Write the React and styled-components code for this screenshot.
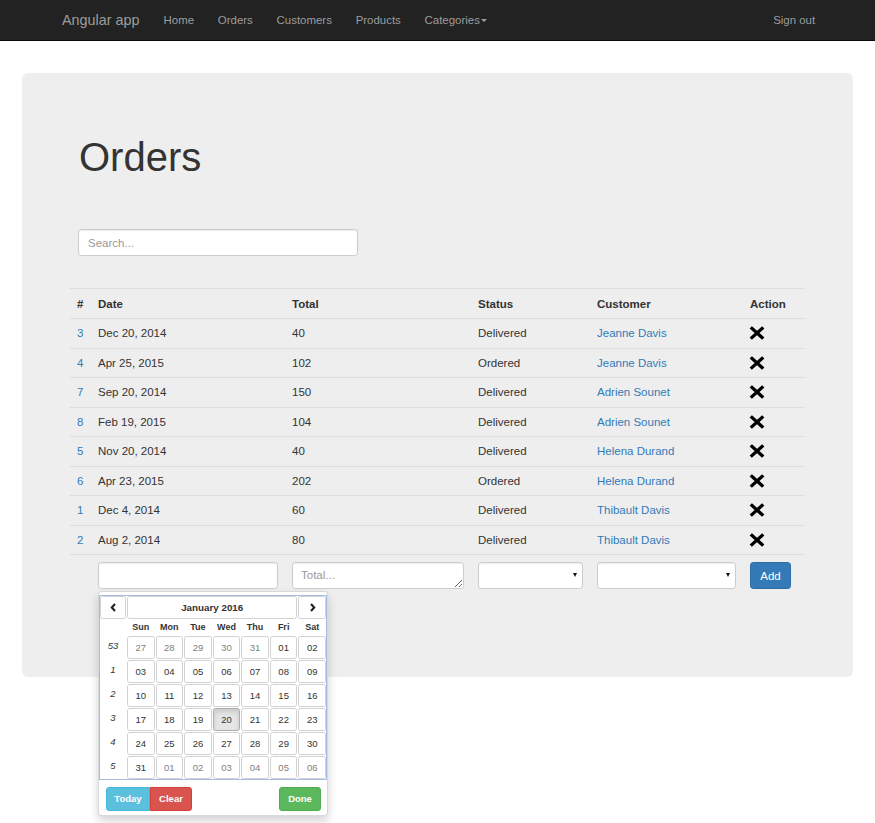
import React from "react";
import styled, { createGlobalStyle, css } from "styled-components";

const GlobalStyle = createGlobalStyle`
  html, body { margin: 0; padding: 0; background: #fff; }
  body {
    font-family: "Liberation Sans", Arial, sans-serif;
    font-size: 11.5px;
    line-height: 1.43;
    color: #333;
  }
  * { box-sizing: border-box; }
`;

const Navbar = styled.nav`
  height: 41px;
  background: #222;
  border-bottom: 1px solid #080808;
  display: flex;
  align-items: center;
  padding: 0 48px 0 50px;
`;

const Brand = styled.a`
  padding: 0 12px;
  font-size: 14.4px;
  line-height: 40px;
  color: #9d9d9d;
  text-decoration: none;
`;

const NavLink = styled.a`
  padding: 0 11.9px;
  font-size: 11.45px;
  line-height: 40px;
  color: #9d9d9d;
  text-decoration: none;
  display: flex;
  align-items: center;
  ${(p) => p.$right && css`margin-left: auto;`}
`;

const Caret = styled.span`
  display: inline-block;
  width: 0;
  height: 0;
  margin-left: 1.5px;
  border-top: 3.5px solid #9d9d9d;
  border-left: 3.5px solid transparent;
  border-right: 3.5px solid transparent;
`;

const Main = styled.main`
  position: relative;
  padding: 32px 22px 146px;
`;

const Jumbotron = styled.section`
  position: relative;
  background: #eee;
  border-radius: 6px;
  padding: 62px 48px 81px;
`;

const Title = styled.h1`
  margin: 0 0 50px 9px;
  font-size: 40px;
  line-height: 44px;
  font-weight: 400;
  color: #333;
`;

const inputBase = css`
  height: 27px;
  border: 1px solid #ccc;
  border-radius: 3.3px;
  background: #fff;
  box-shadow: inset 0 1px 1px rgba(0, 0, 0, 0.075);
  font-family: inherit;
  font-size: 11.5px;
  color: #555;
  padding: 5px 9px;
  outline: none;
  &::placeholder { color: #999; }
`;

const SearchInput = styled.input`
  ${inputBase}
  display: block;
  width: 280px;
  margin: 0 0 32px 8px;
`;

const Table = styled.table`
  width: 100%;
  border-collapse: collapse;
  table-layout: fixed;
`;

const Th = styled.th`
  text-align: left;
  font-weight: 700;
  padding: 6.5px 7px 6.5px;
  line-height: 16px;
  border-top: 1px solid #ddd;
`;

const Td = styled.td`
  padding: 6px 7px;
  line-height: 16.5px;
  border-top: 1px solid #ddd;
  vertical-align: middle;
  ${(p) => p.$form && css`padding: 7px 7px;`}
`;

const Link = styled.a`
  color: #337ab7;
  text-decoration: none;
`;

const RemoveIcon = styled.svg`
  display: block;
  margin-left: -1px;
`;

const FieldWrap = styled.div`
  position: relative;
`;

const TextInput = styled.input`
  ${inputBase}
  display: block;
  width: 100%;
`;

const TextArea = styled.textarea`
  ${inputBase}
  display: block;
  width: 100%;
  resize: vertical;
  line-height: 15px;
  padding: 5px 8px;
`;

const SelectWrap = styled.div`
  position: relative;
  &::after {
    content: "";
    position: absolute;
    right: 6px;
    top: 11px;
    border-top: 4px solid #111;
    border-left: 2.5px solid transparent;
    border-right: 2.5px solid transparent;
    pointer-events: none;
  }
`;

const Select = styled.select`
  ${inputBase}
  appearance: none;
  -webkit-appearance: none;
  display: block;
  width: 100%;
`;

const AddButton = styled.button`
  height: 27px;
  width: 41px;
  padding: 0;
  background: #337ab7;
  border: 1px solid #2e6da4;
  border-radius: 3.3px;
  color: #fff;
  font-family: inherit;
  font-size: 11.5px;
`;

const Popup = styled.div`
  position: absolute;
  top: calc(100% + 2px);
  left: 0;
  width: 230px;
  background: #fff;
  border: 1px solid rgba(0, 0, 0, 0.15);
  border-radius: 4px;
  box-shadow: 0 5px 10px rgba(0, 0, 0, 0.175);
  padding: 3px 0 4px;
  z-index: 10;
`;

const CalGrid = styled.div`
  border: 1px solid #a1bde6;
  display: grid;
  grid-template-columns: 26px repeat(7, 1fr);
  grid-template-rows: 23px 15px repeat(6, 23px);
  gap: 1px;
`;

const CalButton = styled.button`
  background: #fff;
  border: 1px solid #d2d2d2;
  border-radius: 2.5px;
  padding: 0;
  margin: 0;
  font-family: inherit;
  color: #333;
  display: flex;
  align-items: center;
  justify-content: center;
  ${(p) => p.$span && css`grid-column: ${p.$span};`}
  ${(p) => p.$title && css`font-weight: 700; font-size: 9.8px;`}
  ${(p) => p.$day && css`font-size: 9.5px;`}
  ${(p) => p.$muted && css`color: #808080;`}
  ${(p) => p.$active && css`
    background: #e6e6e6;
    border-color: #adadad;
    box-shadow: inset 0 3px 5px rgba(0, 0, 0, 0.125);
  `}
`;

const WeekDay = styled.div`
  font-size: 9px;
  font-weight: 700;
  text-align: center;
  line-height: 15px;
`;

const WeekNum = styled.div`
  font-size: 9.5px;
  font-style: italic;
  display: flex;
  align-items: center;
  justify-content: center;
  padding-bottom: 2px;
`;

const Footer = styled.div`
  display: flex;
  justify-content: space-between;
  padding: 7px 6px 0 7px;
`;

const BtnGroup = styled.div`
  display: flex;
`;

const SmallBtn = styled.button`
  height: 23.5px;
  padding: 0;
  width: ${(p) => p.$w}px;
  border: 1px solid ${(p) => p.$border};
  background: ${(p) => p.$bg};
  color: #fff;
  font-family: inherit;
  font-size: 9.5px;
  font-weight: 700;
  border-radius: ${(p) => p.$radius || "3px"};
`;

const orders = [
  { id: 3, date: "Dec 20, 2014", total: 40, status: "Delivered", customer: "Jeanne Davis" },
  { id: 4, date: "Apr 25, 2015", total: 102, status: "Ordered", customer: "Jeanne Davis" },
  { id: 7, date: "Sep 20, 2014", total: 150, status: "Delivered", customer: "Adrien Sounet" },
  { id: 8, date: "Feb 19, 2015", total: 104, status: "Delivered", customer: "Adrien Sounet" },
  { id: 5, date: "Nov 20, 2014", total: 40, status: "Delivered", customer: "Helena Durand" },
  { id: 6, date: "Apr 23, 2015", total: 202, status: "Ordered", customer: "Helena Durand" },
  { id: 1, date: "Dec 4, 2014", total: 60, status: "Delivered", customer: "Thibault Davis" },
  { id: 2, date: "Aug 2, 2014", total: 80, status: "Delivered", customer: "Thibault Davis" },
];

const pad = (n) => String(n).padStart(2, "0");

const weeks = [
  { n: 53, days: [27, 28, 29, 30, 31, 1, 2].map((d, i) => ({ d, muted: i < 5 })) },
  { n: 1, days: [3, 4, 5, 6, 7, 8, 9].map((d) => ({ d })) },
  { n: 2, days: [10, 11, 12, 13, 14, 15, 16].map((d) => ({ d })) },
  { n: 3, days: [17, 18, 19, 20, 21, 22, 23].map((d) => ({ d, active: d === 20 })) },
  { n: 4, days: [24, 25, 26, 27, 28, 29, 30].map((d) => ({ d })) },
  { n: 5, days: [31, 1, 2, 3, 4, 5, 6].map((d, i) => ({ d, muted: i > 0 })) },
];

const Remove = () => (
  <RemoveIcon width="16" height="14" viewBox="0 0 16 14">
    <path d="M3 2.5 L13 11.5 M13 2.5 L3 11.5" stroke="#000" strokeWidth="3.3" strokeLinecap="square" fill="none" />
  </RemoveIcon>
);

const Chevron = ({ dir }) => (
  <svg width="7" height="9" viewBox="0 0 7 9">
    <path
      d={dir === "left" ? "M5 1 L1.8 4.5 L5 8" : "M2 1 L5.2 4.5 L2 8"}
      stroke="#222"
      strokeWidth="2.1"
      fill="none"
    />
  </svg>
);

const DatePicker = () => (
  <Popup>
    <CalGrid>
      <CalButton><Chevron dir="left" /></CalButton>
      <CalButton $title $span="2 / 8">January 2016</CalButton>
      <CalButton><Chevron dir="right" /></CalButton>
      <div />
      {["Sun", "Mon", "Tue", "Wed", "Thu", "Fri", "Sat"].map((w) => (
        <WeekDay key={w}>{w}</WeekDay>
      ))}
      {weeks.map((wk) => (
        <React.Fragment key={wk.n}>
          <WeekNum>{wk.n}</WeekNum>
          {wk.days.map((day, i) => (
            <CalButton key={i} $day $muted={day.muted} $active={day.active}>
              {pad(day.d)}
            </CalButton>
          ))}
        </React.Fragment>
      ))}
    </CalGrid>
    <Footer>
      <BtnGroup>
        <SmallBtn $w={44} $bg="#5bc0de" $border="#46b8da" $radius="3px 0 0 3px">Today</SmallBtn>
        <SmallBtn $w={42} $bg="#d9534f" $border="#d43f3a" $radius="0 3px 3px 0">Clear</SmallBtn>
      </BtnGroup>
      <SmallBtn $w={42} $bg="#5cb85c" $border="#4cae4c">Done</SmallBtn>
    </Footer>
  </Popup>
);

export default function App() {
  return (
    <>
      <GlobalStyle />
      <Navbar>
        <Brand href="#">Angular app</Brand>
        <NavLink href="#">Home</NavLink>
        <NavLink href="#">Orders</NavLink>
        <NavLink href="#">Customers</NavLink>
        <NavLink href="#">Products</NavLink>
        <NavLink href="#">Categories<Caret /></NavLink>
        <NavLink href="#" $right>Sign out</NavLink>
      </Navbar>
      <Main>
        <Jumbotron>
          <Title>Orders</Title>
          <SearchInput placeholder="Search..." />
          <Table>
            <colgroup>
              <col style={{ width: 21 }} />
              <col style={{ width: 194 }} />
              <col style={{ width: 186 }} />
              <col style={{ width: 119 }} />
              <col style={{ width: 153 }} />
              <col style={{ width: 62 }} />
            </colgroup>
            <thead>
              <tr>
                <Th>#</Th>
                <Th>Date</Th>
                <Th>Total</Th>
                <Th>Status</Th>
                <Th>Customer</Th>
                <Th>Action</Th>
              </tr>
            </thead>
            <tbody>
              {orders.map((o) => (
                <tr key={o.id}>
                  <Td><Link href="#">{o.id}</Link></Td>
                  <Td>{o.date}</Td>
                  <Td>{o.total}</Td>
                  <Td>{o.status}</Td>
                  <Td><Link href="#">{o.customer}</Link></Td>
                  <Td><Remove /></Td>
                </tr>
              ))}
              <tr>
                <Td $form />
                <Td $form>
                  <FieldWrap>
                    <TextInput />
                    <DatePicker />
                  </FieldWrap>
                </Td>
                <Td $form><TextArea rows={1} placeholder="Total..." /></Td>
                <Td $form>
                  <SelectWrap><Select><option></option></Select></SelectWrap>
                </Td>
                <Td $form>
                  <SelectWrap><Select><option></option></Select></SelectWrap>
                </Td>
                <Td $form><AddButton>Add</AddButton></Td>
              </tr>
            </tbody>
          </Table>
        </Jumbotron>
      </Main>
    </>
  );
}
